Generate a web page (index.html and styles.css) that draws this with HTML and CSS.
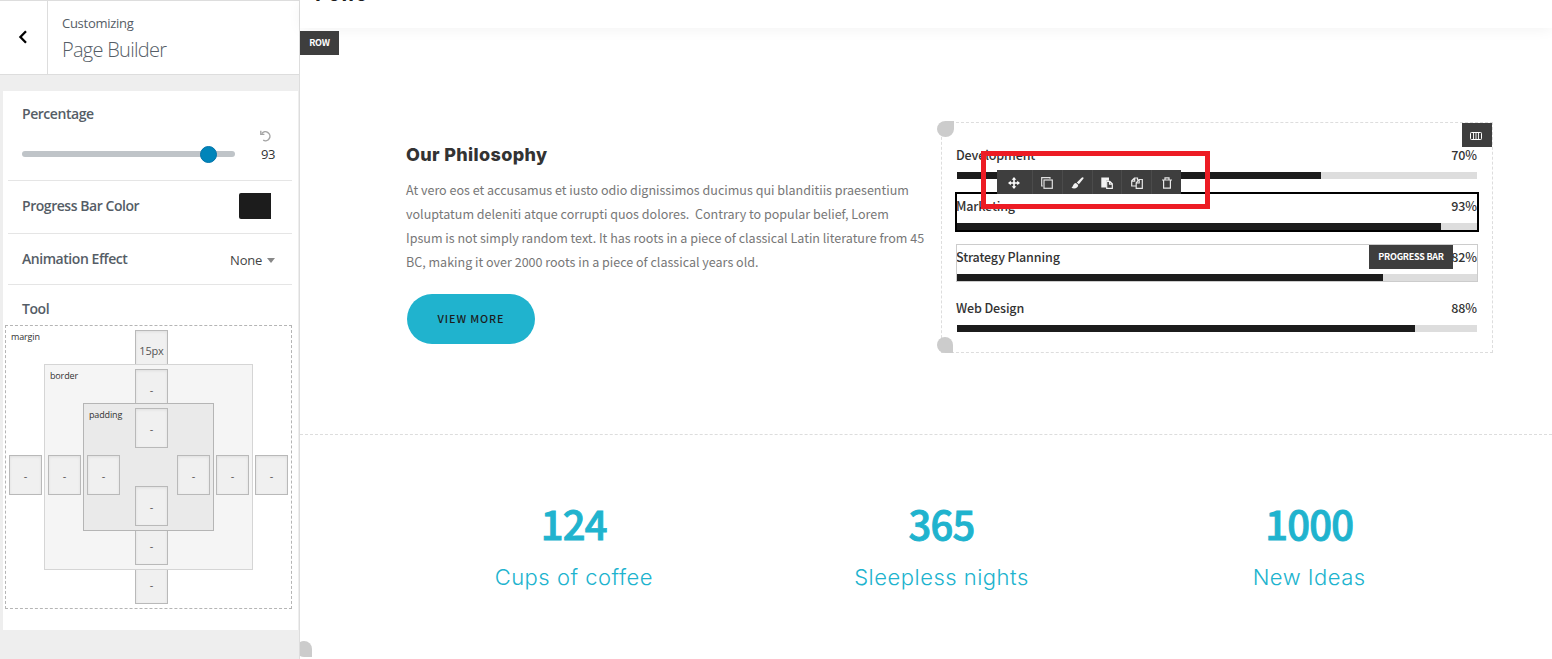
FILE: index.html
```html
<!DOCTYPE html>
<html lang="en">
<head>
<meta charset="utf-8">
<title>Page Builder</title>
<link rel="stylesheet" href="styles.css">
</head>
<body>
<div class="app">
  <aside class="sidebar">
    <header class="side-head">
      <button class="back" aria-label="Back"><svg width="10" height="14" viewBox="0 0 10 14"><path d="M8 1.2 2.4 7 8 12.8" fill="none" stroke="#000" stroke-width="2.3"/></svg></button>
      <div class="side-title"><span class="sub">Customizing</span><span class="name">Page Builder</span></div>
    </header>
    <section class="panel">
      <div class="control percentage">
        <span class="label">Percentage</span>
        <div class="slider-row">
          <div class="track"><i class="knob"></i></div>
          <div class="value">
            <svg class="reset" width="12" height="12" viewBox="0 0 12 12"><path d="M1.8 3.6A4.5 4.5 0 1 1 3.2 10.2" fill="none" stroke="#a5a5a5" stroke-width="1.5"/><path d="M.8 .8V4.4H4.4" fill="none" stroke="#a5a5a5" stroke-width="1.4"/></svg>
            <span>93</span>
          </div>
        </div>
      </div>
      <div class="control color"><span class="label">Progress Bar Color</span><i class="swatch"></i></div>
      <div class="control effect"><span class="label">Animation Effect</span><span class="select">None<i class="caret"></i></span></div>
      <div class="control tool"><span class="label">Tool</span></div>
      <div class="box margin">
        <span class="tag">margin</span>
        <span class="cell top">15px</span><span class="cell left">-</span><span class="cell right">-</span><span class="cell bottom">-</span>
        <div class="box border">
          <span class="tag">border</span>
          <span class="cell top">-</span><span class="cell left">-</span><span class="cell right">-</span><span class="cell bottom">-</span>
          <div class="box pad">
            <span class="tag">padding</span>
            <span class="cell top">-</span><span class="cell left">-</span><span class="cell right">-</span><span class="cell bottom">-</span>
          </div>
        </div>
      </div>
    </section>
  </aside>

  <main class="preview">
    <header class="site-head"><span class="logo">Folio</span></header>
    <section class="row about">
      <span class="badge row-badge">ROW</span>
      <div class="col text-col">
        <h2>Our Philosophy</h2>
        <p><span>At vero eos et accusamus et iusto odio dignissimos ducimus qui blanditiis praesentium</span><br>
        <span>voluptatum deleniti atque corrupti quos dolores.&nbsp; Contrary to popular belief, Lorem</span><br>
        <span>Ipsum is not simply random text. It has roots in a piece of classical Latin literature from 45</span><br>
        <span>BC, making it over 2000 roots in a piece of classical years old.</span></p>
        <a class="cta">VIEW MORE</a>
      </div>
      <div class="col bars-col">
        <i class="drop drop-top"></i><i class="drop drop-bottom"></i>
        <span class="col-badge"><svg width="12" height="8" viewBox="0 0 12 8"><rect x=".5" y=".5" width="11" height="7" rx=".8" fill="none" stroke="#fff"/><path d="M3.5 1V7M6 1V7M8.5 1V7" stroke="#fff" stroke-width="1" opacity=".9"/></svg></span>
        <div class="item"><div class="cap"><span>Development</span><span>70%</span></div><div class="bar"><i style="width:70%"></i></div></div>
        <div class="item active"><div class="cap"><span>Marketing</span><span>93%</span></div><div class="bar"><i style="width:93%"></i></div>
          <div class="tools">
            <span><svg width="12" height="12" viewBox="0 0 12 12"><path d="M6 0 8.3 2.8H6.8V5.2H9.2V3.7L12 6 9.2 8.3V6.8H6.8V9.2H8.3L6 12 3.7 9.2H5.2V6.8H2.8V8.3L0 6 2.8 3.7V5.2H5.2V2.8H3.7Z" fill="#fff"/></svg></span>
            <span><svg width="12" height="12" viewBox="0 0 12 12" fill="none" stroke="#e0e0e0" stroke-width="1.2"><path d="M1.8 9H.7V.7H9V1.8"/><rect x="3" y="3" width="8.3" height="8.3"/></svg></span>
            <span><svg width="13" height="12" viewBox="0 0 13 12" fill="#f2f2f2"><path d="M11.7.2C12.6.2 12.8 1 12.3 1.8L7.9 7.3 5.8 5.4 10.6.7Z"/><path d="M5 6 7.2 8C7.2 11 3.6 12.4.3 10.8 2.4 10.2 1.8 6.4 5 6Z"/></svg></span>
            <span><svg width="12" height="12" viewBox="0 0 12 12"><path d="M.3.5H8V3.7H5V10.5H.3Z" fill="#f2f2f2"/><path d="M5.7 4.3H8.8L11.3 6.8V11.3H5.7ZM8.5 4.5V7.2H11" fill="none" stroke="#f2f2f2" stroke-width="1.2"/></svg></span>
            <span><svg width="12" height="12" viewBox="0 0 12 12" fill="none" stroke="#e8e8e8" stroke-width="1.2"><path d="M5 9H.7V3.8L3.4 1H6.5V3.5M3.7 1.2V4.2H1"/><path d="M5.2 5.8 8 2.5H11.3V11.3H5.2ZM8.2 2.8V6H5.5"/></svg></span>
            <span><svg width="10" height="12" viewBox="0 0 10 12" fill="none" stroke="#e8e8e8" stroke-width="1.2"><path d="M0 3H10M3 3V.8H7V3M1.6 3V11.2H8.4V3"/></svg></span>
          </div>
          <i class="highlight"></i>
        </div>
        <div class="item hover"><div class="cap"><span>Strategy Planning</span><span>82%</span></div><div class="bar"><i style="width:82%"></i></div><span class="badge item-badge">PROGRESS BAR</span></div>
        <div class="item"><div class="cap"><span>Web Design</span><span>88%</span></div><div class="bar"><i style="width:88%"></i></div></div>
      </div>
    </section>
    <section class="row counters">
      <div class="counter"><b>124</b><span>Cups of coffee</span></div>
      <div class="counter"><b>365</b><span>Sleepless nights</span></div>
      <div class="counter"><b>1000</b><span>New Ideas</span></div>
      <i class="drop drop-row"></i>
    </section>
  </main>
</div>
</body>
</html>
```
FILE: styles.css
```css
* { box-sizing: border-box; }
body { margin: 0; background: #fff; }
i { display: block; font-style: normal; }
svg { display: block; }
.app { display: flex; width: 1552px; height: 659px; overflow: hidden; }

/* sidebar */
.sidebar { width: 300px; background: #eee; border-right: 1px solid #ddd; font-family: "Open Sans", "Noto Sans", sans-serif; color: #555d66; }
.side-head { display: flex; height: 75px; background: #fff; border-top: 1px solid #ddd; border-bottom: 1px solid #ddd; }
.back { width: 48px; padding: 0 1px 1px 0; border: 0; border-right: 1px solid #ddd; background: #fff; display: flex; align-items: center; justify-content: center; }
.side-title { padding: 12px 0 0 14px; display: flex; flex-direction: column; white-space: nowrap; }
.sub { font-size: 13px; line-height: 20px; letter-spacing: -.27px; }
.name { font-size: 20px; line-height: 33px; font-weight: 300; letter-spacing: -.72px; }
.panel { margin: 16px 1px 0 3px; height: 539px; background: #fff; padding: 0 5px; }
.control { display: flex; justify-content: space-between; border-bottom: 1px solid #e5e5e5; margin-right: 1px; padding: 0 21px 0 14px; }
.label { font-size: 14px; line-height: 20px; font-weight: 600; letter-spacing: -.45px; white-space: nowrap; }
.percentage { height: 90px; flex-direction: column; justify-content: flex-start; padding-top: 13px; }
.slider-row { display: flex; justify-content: space-between; padding-top: 6px; }
.track { width: 213px; height: 6px; border-radius: 3px; background: #bfc4c8; margin-top: 21px; }
.knob { width: 17px; height: 17px; border-radius: 50%; background: #0085ba; border: 1px solid #0073aa; margin: -5px 0 0 178px; }
.value { width: 18px; margin-right: -8px; font-size: 13px; line-height: 16px; letter-spacing: -.5px; color: #333; }
.reset { margin: 0 0 4px -1px; }
.value span { display: block; }
.color { height: 53px; padding-top: 12px; }
.color .label, .effect .label { padding-top: 3px; }
.swatch { width: 32px; height: 26px; background: #1c1c1c; border-radius: 2px 0 0 2px; }
.effect { height: 51px; padding-top: 12px; }
.select { display: flex; gap: 5px; font-size: 13px; line-height: 20px; letter-spacing: -.25px; color: #444; padding-top: 4px; margin-right: -4px; }
.caret { border: 4px solid transparent; border-top: 5px solid #888; border-bottom: 0; margin-top: 8px; }
.tool { height: 40px; border: 0; padding-top: 14px; }

/* nested box-model editor */
.box { display: grid; grid-template-columns: 35px minmax(0, 1fr) 35px; grid-template-rows: 34px minmax(0, 1fr) 34px; padding: 4px 3px; position: relative; font-size: 9px; color: #333; }
.box > .box { grid-area: 2 / 2; }
.margin { width: 287px; height: 284px; margin-left: -3px; border: 1px dashed #b5b5b5; }
.border { border: 1px solid #d5d5d5; background: #f5f5f5; }
.pad { border: 1px solid #b5b5b5; background: #eaeaea; }
.tag { position: absolute; left: 5px; top: 5px; line-height: 12px; letter-spacing: -.15px; }
.cell { width: 33px; height: 40px; border: 1px solid #b9b9b9; background: #f0f0f0; box-shadow: inset 0 1px 3px rgba(0,0,0,.07); font-size: 11px; line-height: 40px; letter-spacing: -.2px; text-align: center; color: #555; }
.top { grid-area: 1 / 1 / 2 / 4; justify-self: center; margin-left: 6px; }
.bottom { grid-area: 3 / 1 / 4 / 4; justify-self: center; align-self: end; margin-left: 6px; }
.left { grid-area: 2 / 1; align-self: center; margin-top: 16px; }
.right { grid-area: 2 / 3; align-self: center; justify-self: end; margin-top: 16px; }

/* preview */
.preview { flex: 1; display: flex; flex-direction: column; background: #fff; font-family: "Noto Sans CJK SC", sans-serif; }
.site-head { height: 28px; box-shadow: 0 2px 14px rgba(0,0,0,.05); padding-left: 15px; }
.logo { display: block; font: 700 21px/24px Inter, sans-serif; letter-spacing: 1px; color: #1c1c1c; margin-top: -18px; }
.row { position: relative; display: flex; padding: 0 59px 0 91px; }
.about { height: 407px; padding-top: 94px; border-bottom: 1px dashed #ddd; }
.badge { position: absolute; background: #3e3e3e; color: #fff; font-size: 9px; line-height: 24px; font-weight: 700; letter-spacing: -.25px; text-align: center; white-space: nowrap; }
.row-badge { left: 0; top: 3px; width: 39px; }
.text-col { width: 550px; padding: 20px 0 0 15px; }
h2 { margin: 0; font: 800 18px/26px Inter, sans-serif; color: #333; letter-spacing: .35px; }
p { margin: 10px 0 0; font-size: 12.54px; line-height: 24px; color: #777; white-space: nowrap; }
.cta { display: block; width: 128px; height: 50px; margin: 20px 0 0 1px; border-radius: 25px; background: #20b3ce; color: #1c1c1c; font-size: 10.75px; font-weight: 500; line-height: 50px; letter-spacing: .9px; text-align: center; }
.bars-col { position: relative; width: 552px; height: 231px; border: 1px dashed #ddd; padding: 20px 15px 0; display: flex; flex-direction: column; gap: 15px; }
.drop { position: absolute; width: 16px; height: 16px; border-radius: 50%; background: #ccc; }
.drop-top { left: -5px; top: -2px; width: 17px; border-top-right-radius: 0; }
.drop-bottom { left: -5px; bottom: -1px; border-bottom-right-radius: 0; }
.drop-row { left: -4px; top: 206px; border-bottom-right-radius: 0; clip-path: inset(0 0 0 4px); }
.col-badge { position: absolute; right: 0; top: 0; width: 30px; height: 24px; padding: 2px 2px 0 0; background: #3e3e3e; display: flex; align-items: center; justify-content: center; }
.item { position: relative; height: 36px; }
.cap { display: flex; justify-content: space-between; height: 29px; line-height: 24px; margin-left: -1px; font-size: 12.54px; font-weight: 500; letter-spacing: -.14px; color: #333; }
.bar { height: 7px; background: #ddd; }
.bar i { height: 7px; background: #1c1c1c; }
.active { outline: 2px solid #000; z-index: 2; }
.hover { outline: 1px solid #ccc; }
.item-badge { right: 24px; top: 0; width: 84px; }
.tools { position: absolute; left: 40px; top: -24px; height: 24px; width: 184px; display: flex; background: #3e3e3e; }
.tools span { width: 30px; display: flex; align-items: center; justify-content: center; border-left: 1px solid #4b4b4b; padding-top: 1px; }
.tools span:first-child { width: 35px; border-left: 0; }
.highlight { position: absolute; left: 24px; top: -43px; width: 229px; height: 58px; border: 5px solid #ed1c24; }
.counters { padding-left: 90px; padding-top: 63px; height: 224px; }
.counter { flex: 1; display: flex; flex-direction: column; align-items: center; color: #20b3ce; }
.counter b { font-size: 40px; line-height: 50px; font-weight: 500; letter-spacing: -.8px; -webkit-text-stroke: .9px #20b3ce; }
.counter span { font: 300 22px/30px Inter, sans-serif; letter-spacing: .5px; padding-top: 14px; }
```
